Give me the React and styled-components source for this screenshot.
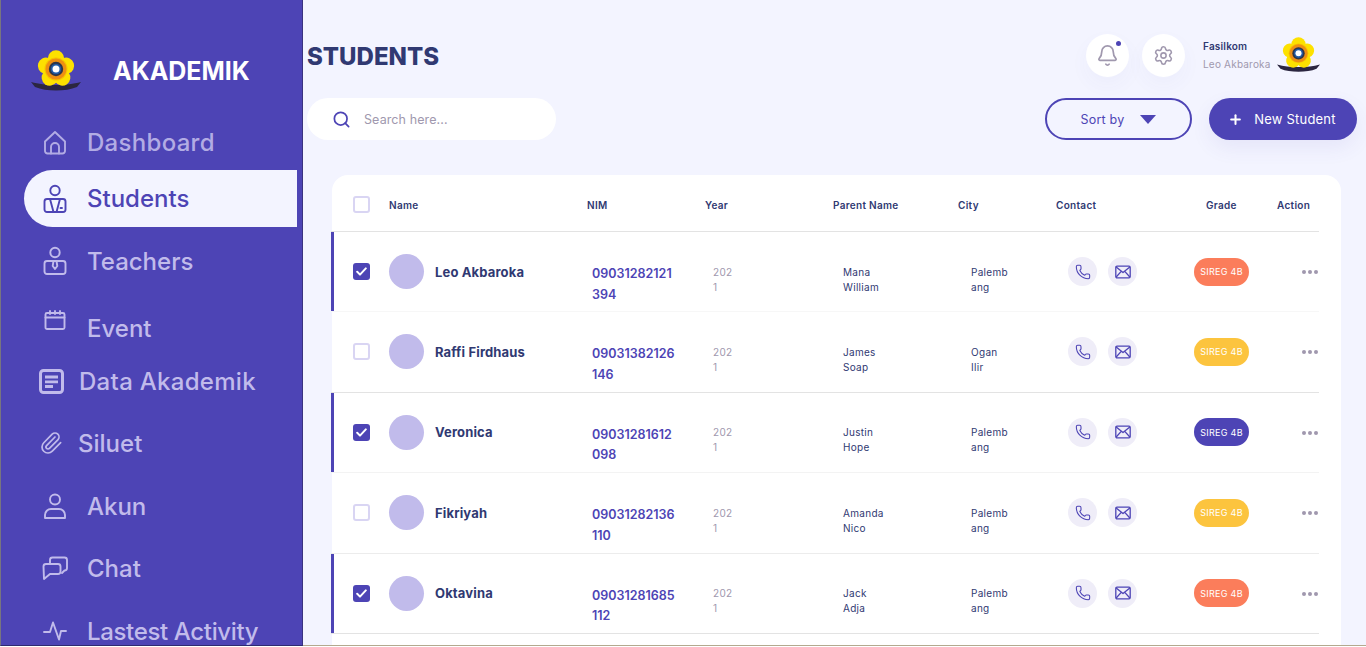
import React from "react";
import styled, { createGlobalStyle } from "styled-components";
import { Bell, Paperclip, Phone, Plus, Search, Settings } from "lucide-react";

const GlobalStyle = createGlobalStyle`
  html, body {
    margin: 0;
    padding: 0;
    background: #fff;
    font-family: Inter, "Noto Sans", sans-serif;
    overflow: hidden;
  }
  * {
    box-sizing: border-box;
  }
`;

const Page = styled.div`
  width: 1366px;
  height: 647px;
  display: flex;
  flex-direction: column;
  overflow: hidden;
`;

const Shell = styled.div`
  flex: 1;
  min-height: 0;
  display: flex;
  background: #f3f4ff;
  border-bottom: 1px solid #b3a98f;
`;

const Sidebar = styled.aside`
  width: 303px;
  flex: none;
  padding-top: 50px;
  background: #4d44b5;
  border-left: 1px solid #77757f;
  border-right: 1px solid #3a3380;
  border-bottom: 1px solid #2f2a70;
  margin-bottom: -1px;
  overflow: hidden;
`;

const Brand = styled.div`
  display: flex;
  align-items: center;
  gap: 32px;
  height: 42px;
  padding-left: 30px;
`;

const BrandName = styled.div`
  color: #fff;
  font-size: 25px;
  font-weight: 700;
`;

const Nav = styled.nav`
  margin-top: 26px;
  display: flex;
  flex-direction: column;
`;

const NavItem = styled.div`
  flex: none;
  display: flex;
  align-items: center;
  width: 273px;
  height: ${(p) => (p.$active ? 57 : 48)}px;
  margin-left: 23px;
  margin-top: ${(p) => p.$top}px;
  padding-left: ${(p) => p.$indent}px;
  gap: ${(p) => p.$gap}px;
  color: ${(p) => (p.$active ? "#4d44b5" : "#c1bbeb")};
  background: ${(p) => (p.$active ? "#f3f4ff" : "transparent")};
  border-radius: 29px 0 0 29px;
  font-size: 24px;
  font-weight: 500;
  letter-spacing: ${(p) => p.$track || 0}px;
  white-space: nowrap;
  opacity: ${(p) => (p.$dim ? 0.88 : 1)};
`;

const NavIcon = styled.span`
  width: 44px;
  flex: none;
  display: flex;
  justify-content: center;
  padding-bottom: ${(p) => p.$lift || 0}px;
`;

const Main = styled.main`
  flex: 1;
  min-width: 0;
  display: flex;
  flex-direction: column;
  padding: 34px 9px 0 4px;
  overflow: hidden;
`;

const TopBar = styled.header`
  display: flex;
  align-items: center;
  height: 43px;
  flex: none;
`;

const Title = styled.h1`
  margin: 1px 0 0;
  color: #303972;
  font-size: 24px;
  font-weight: 800;
`;

const TopActions = styled.div`
  margin-left: auto;
  display: flex;
  align-items: center;
  padding-right: 37px;
`;

const RoundButton = styled.div`
  position: relative;
  width: 43px;
  height: 43px;
  margin-right: 13px;
  border-radius: 50%;
  background: #fff;
  color: #a098ae;
  display: flex;
  align-items: center;
  justify-content: center;
  box-shadow: 0 8px 20px rgba(77, 68, 181, 0.04);
`;

const NotifyDot = styled.span`
  position: absolute;
  top: 7px;
  right: 8px;
  width: 5px;
  height: 5px;
  border-radius: 50%;
  background: #4d44b5;
`;

const Profile = styled.div`
  margin-left: 5px;
  margin-right: 7px;
  width: 67px;
`;

const ProfileName = styled.div`
  color: #303972;
  font-size: 10px;
  font-weight: 600;
  letter-spacing: 0.2px;
  line-height: 18px;
  margin-top: -1px;
`;

const ProfileRole = styled.div`
  color: #a098ae;
  font-size: 10px;
  letter-spacing: 0.2px;
  line-height: 18px;
  white-space: nowrap;
`;

const Toolbar = styled.div`
  flex: none;
  display: flex;
  align-items: center;
  height: 42px;
  margin-top: 21px;
`;

const SearchBox = styled.label`
  width: 249px;
  height: 42px;
  display: flex;
  align-items: center;
  gap: 11px;
  padding-left: 25px;
  background: #fff;
  border-radius: 21px;
  color: #4d44b5;
`;

const SearchInput = styled.input`
  flex: 1;
  min-width: 0;
  border: 0;
  outline: 0;
  background: none;
  font: 400 12.5px Inter, sans-serif;
  letter-spacing: 0.1px;
  color: #303972;
  &::placeholder {
    color: #a098ae;
    opacity: 1;
  }
`;

const SortButton = styled.button`
  margin-left: auto;
  width: 147px;
  height: 42px;
  display: flex;
  align-items: center;
  justify-content: center;
  gap: 16px;
  padding: 0;
  background: none;
  border: 2px solid #4d44b5;
  border-radius: 21px;
  color: #4d44b5;
  font: 400 12.5px Inter, sans-serif;
  letter-spacing: 0.2px;
`;

const NewButton = styled.button`
  margin-left: 17px;
  width: 148px;
  height: 42px;
  display: flex;
  align-items: center;
  justify-content: center;
  gap: 11px;
  padding: 0 2px 0 0;
  background: #4d44b5;
  border: 0;
  border-radius: 21px;
  color: #fff;
  font: 400 13px Inter, sans-serif;
  letter-spacing: 0.2px;
  box-shadow: 0 8px 20px rgba(77, 68, 181, 0.08);
`;

const Card = styled.section`
  flex: 1;
  min-height: 0;
  margin: 35px 16px 0 25px;
  padding-right: 22px;
  background: #fff;
  border-radius: 16px 16px 0 0;
`;

const columns = "58px 198px 118px 128px 125px 98px 138px 83px 42px";

const HeadRow = styled.div`
  display: grid;
  grid-template-columns: ${columns};
  align-items: center;
  height: 57px;
  margin-left: -1px;
  padding-top: 3px;
  border-bottom: 1px solid #e3e3e3;
`;

const HeadCell = styled.div`
  padding-left: ${(p) => p.$pad || 0}px;
  color: #303972;
  font-size: 10px;
  font-weight: 600;
  letter-spacing: 0.3px;
  white-space: nowrap;
`;

const Row = styled.div`
  display: grid;
  grid-template-columns: ${columns};
  align-items: start;
  height: 80.4px;
  margin-left: -1px;
  border-bottom: 1px solid ${(p) => p.$line};
  box-shadow: ${(p) => (p.$selected ? "inset 3px 0 0 #4d44b5" : "none")};
`;

const CheckCell = styled.div`
  display: flex;
  padding: ${(p) => p.$top}px 0 0 22px;
`;

const Checkbox = styled.span`
  width: 17px;
  height: 17px;
  border-radius: 3px;
  display: flex;
  align-items: center;
  justify-content: center;
  border: ${(p) => (p.$checked ? "none" : "2px solid #d9d5f3")};
  background: ${(p) => (p.$checked ? "#4d44b5" : "#fff")};
`;

const NameCell = styled.div`
  display: flex;
  align-items: center;
  gap: 11px;
  padding-top: 22px;
`;

const Avatar = styled.span`
  width: 35px;
  height: 35px;
  flex: none;
  border-radius: 50%;
  background: #c1bbeb;
`;

const StudentName = styled.span`
  color: #303972;
  font-size: 13px;
  font-weight: 700;
  letter-spacing: 0.15px;
  white-space: nowrap;
`;

const Nim = styled.div`
  padding: 32px 0 0 5px;
  color: #4d44b5;
  font-size: 12.5px;
  font-weight: 600;
  line-height: 20.5px;
  white-space: pre-line;
`;

const SmallText = styled.div`
  padding: 32.5px 0 0 ${(p) => p.$pad}px;
  color: ${(p) => p.$color || "#303972"};
  font-size: 10px;
  line-height: 15px;
  letter-spacing: 0.3px;
  white-space: pre-line;
`;

const ContactCell = styled.div`
  display: flex;
  gap: 11px;
  padding: 25px 0 0 12px;
`;

const ContactButton = styled.span`
  width: 29px;
  height: 29px;
  border-radius: 50%;
  background: #efedf8;
  color: #4d44b5;
  display: flex;
  align-items: center;
  justify-content: center;
`;

const GradeCell = styled.div`
  padding-top: 25.5px;
`;

const Badge = styled.span`
  display: flex;
  align-items: center;
  justify-content: center;
  width: 55px;
  height: 28px;
  border-radius: 14px;
  background: ${(p) => p.$color};
  color: #fff;
  font-size: 9px;
  letter-spacing: 0.3px;
  white-space: nowrap;
`;

const ActionCell = styled.div`
  padding: 38px 0 0 25px;
  display: flex;
  gap: 2px;
`;

const Dot = styled.span`
  width: 4px;
  height: 4px;
  flex: none;
  border-radius: 50%;
  background: #a098ae;
`;

const BottomEdge = styled.div`
  flex: none;
  height: 1px;
  background: #fff;
`;

const SortArrow = () => (
  <svg width="16" height="9" viewBox="0 0 16 9">
    <path d="M0 0H16L8 9Z" fill="#4d44b5" />
  </svg>
);

const Logo = ({ width }) => (
  <svg width={width} height={width * 0.84} viewBox="0 0 50 42">
    <path d="M0 32C8 34 15 35 25 35S42 34 50 32L46 37C40 39.500 33 40.500 25 40.500S10 39.500 4 37Z" fill="#2b2640" />
    {[0, 72, 144, 216, 288].map((a) => (
      <circle key={a} cx="25" cy="8.500" r="8.200" fill="#fde100" transform={`rotate(${a} 25 19)`} />
    ))}
    <circle cx="25" cy="19" r="11.500" fill="#f7c400" />
    <circle cx="25" cy="19" r="10.500" fill="#ee8f12" />
    <circle cx="25" cy="19" r="7.200" fill="#2f3548" />
    <circle cx="25" cy="19" r="5.300" fill="#1f5aa6" />
    <circle cx="25" cy="19" r="3.500" fill="#fff" />
  </svg>
);

const stroke = { fill: "none", stroke: "currentColor", strokeWidth: 1.9, strokeLinecap: "round", strokeLinejoin: "round" };

const HomeIcon = () => (
  <svg width="24" height="25" viewBox="0 0 24 25" {...stroke}>
    <path d="M2 11.5 12 2l10 9.5V21a2.5 2.5 0 0 1-2.5 2.5h-15A2.5 2.5 0 0 1 2 21Z" />
    <path d="M8 23.5V17a4 4 0 0 1 8 0v6.500" />
  </svg>
);

const StudentIcon = () => (
  <svg width="24" height="30" viewBox="0 0 24 30" {...stroke}>
    <circle cx="12" cy="6.500" r="4.700" />
    <rect x="1.500" y="15" width="21" height="13" rx="2.500" />
    <path d="M7 15l3.500 13M17 15l-3.500 13" />
    <path d="M17.500 24h1.500" />
  </svg>
);

const TeacherIcon = () => (
  <svg width="24" height="30" viewBox="0 0 24 30" {...stroke}>
    <circle cx="12" cy="6.500" r="4.700" />
    <rect x="1.500" y="15" width="21" height="13" rx="2.500" />
    <path d="M10.500 15h3l.8 5-2.300 3-2.300-3Z" />
  </svg>
);

const CalendarIcon = () => (
  <svg width="22" height="20" viewBox="0 0 22 20" {...stroke}>
    <rect x="1.500" y="3" width="19" height="16" rx="1.500" />
    <path d="M1.500 7.500h19M6 1v3M11 1v3M16 1v3" />
  </svg>
);

const DocIcon = () => (
  <svg width="25" height="25" viewBox="0 0 25 25" fill="none" stroke="currentColor">
    <rect x="1.500" y="1.500" width="22" height="22" rx="3" strokeWidth="3" />
    <path d="M6 8h13M6 12.800h13M6 17.500h8" strokeWidth="2.800" />
  </svg>
);

const UserIcon = () => (
  <svg width="22" height="26" viewBox="0 0 22 26" {...stroke}>
    <circle cx="11" cy="6.500" r="5" />
    <path d="M1 25v-3a6 6 0 0 1 6-6h8a6 6 0 0 1 6 6v3Z" />
  </svg>
);

const ChatIcon = () => (
  <svg width="27" height="25" viewBox="0 0 27 25" {...stroke}>
    <path d="M8 8V4a2.500 2.500 0 0 1 2.500-2.500h12A2.500 2.500 0 0 1 25 4v8a2.500 2.500 0 0 1-2.500 2.500L20 17" />
    <path d="M1.500 10.500A2.500 2.500 0 0 1 4 8h12a2.500 2.500 0 0 1 2.500 2.500v5A2.500 2.500 0 0 1 16 18H8l-6 5Z" />
  </svg>
);

const ActivityIcon = () => (
  <svg width="24" height="20" viewBox="0 0 24 20" {...stroke}>
    <path d="M1 11H7L10 1.500 16 18.500 18 10H23" />
  </svg>
);

const MailIcon = () => (
  <svg width="16" height="14" viewBox="0 0 16 14" fill="none" stroke="currentColor" strokeWidth="1.300" strokeLinejoin="round">
    <rect x="0.800" y="1.200" width="14.400" height="11.600" rx="1.200" />
    <path d="M1.200 2 8 7.600 14.800 2M1.200 12l5-5.600M14.800 12l-5-5.600" />
  </svg>
);

const CheckMark = () => (
  <svg width="11" height="9" viewBox="0 0 11 9" fill="none" stroke="#fff" strokeWidth="2" strokeLinecap="round" strokeLinejoin="round">
    <path d="M1.200 4.800 4 7.600 9.800 1.400" />
  </svg>
);

const navItems = [
  { label: "Dashboard", icon: <HomeIcon />, top: 0, indent: 9, gap: 10, dim: true, track: 0.3 },
  { label: "Students", icon: <StudentIcon />, top: 4, indent: 9, gap: 10, active: true },
  { label: "Teachers", icon: <TeacherIcon />, top: 10, indent: 9, gap: 10 },
  { label: "Event", icon: <CalendarIcon />, top: 19, indent: 9, gap: 10, lift: 16 },
  { label: "Data Akademik", icon: <DocIcon />, top: 5, indent: 5, gap: 6, track: 0.3 },
  { label: "Siluet", icon: <Paperclip size={24} strokeWidth={1.7} />, top: 14, indent: 5, gap: 5 },
  { label: "Akun", icon: <UserIcon />, top: 15, indent: 9, gap: 10 },
  { label: "Chat", icon: <ChatIcon />, top: 14, indent: 9, gap: 10 },
  { label: "Lastest Activity", icon: <ActivityIcon />, top: 15, indent: 9, gap: 10, track: -0.35 },
];

const students = [
  { name: "Leo Akbaroka", nim: "09031282121\n394", parent: "Mana\nWilliam", city: "Palemb\nang", grade: "#fb7d5b", selected: true, line: "#f7f7f7" },
  { name: "Raffi Firdhaus", nim: "09031382126\n146", parent: "James\nSoap", city: "Ogan\nIlir", grade: "#fcc43e", selected: false, line: "#e3e3e3" },
  { name: "Veronica", nim: "09031281612\n098", parent: "Justin\nHope", city: "Palemb\nang", grade: "#4d44b5", selected: true, line: "#f3f3f3" },
  { name: "Fikriyah", nim: "09031282136\n110", parent: "Amanda\nNico", city: "Palemb\nang", grade: "#fcc43e", selected: false, line: "#ececec" },
  { name: "Oktavina", nim: "09031281685\n112", parent: "Jack\nAdja", city: "Palemb\nang", grade: "#fb7d5b", selected: true, line: "#e3e3e3" },
];

const App = () => (
  <Page>
    <GlobalStyle />
    <Shell>
      <Sidebar>
        <Brand>
          <Logo width={50} />
          <BrandName>AKADEMIK</BrandName>
        </Brand>
        <Nav>
          {navItems.map((item) => (
            <NavItem
              key={item.label}
              $active={item.active}
              $top={item.top}
              $indent={item.indent}
              $gap={item.gap}
              $dim={item.dim}
              $track={item.track}
            >
              <NavIcon $lift={item.lift}>{item.icon}</NavIcon>
              {item.label}
            </NavItem>
          ))}
        </Nav>
      </Sidebar>
      <Main>
        <TopBar>
          <Title>STUDENTS</Title>
          <TopActions>
            <RoundButton>
              <Bell size={23} strokeWidth={1.8} />
              <NotifyDot />
            </RoundButton>
            <RoundButton>
              <Settings size={21} strokeWidth={1.8} />
            </RoundButton>
            <Profile>
              <ProfileName>Fasilkom</ProfileName>
              <ProfileRole>Leo Akbaroka</ProfileRole>
            </Profile>
            <Logo width={43} />
          </TopActions>
        </TopBar>
        <Toolbar>
          <SearchBox>
            <Search size={19} strokeWidth={2.2} />
            <SearchInput placeholder="Search here..." />
          </SearchBox>
          <SortButton>
            Sort by
            <SortArrow />
          </SortButton>
          <NewButton>
            <Plus size={15} strokeWidth={3.2} />
            New Student
          </NewButton>
        </Toolbar>
        <Card>
          <HeadRow>
            <CheckCell $top={0}>
              <Checkbox />
            </CheckCell>
            <HeadCell>Name</HeadCell>
            <HeadCell>NIM</HeadCell>
            <HeadCell>Year</HeadCell>
            <HeadCell>Parent Name</HeadCell>
            <HeadCell>City</HeadCell>
            <HeadCell>Contact</HeadCell>
            <HeadCell $pad={12}>Grade</HeadCell>
            <HeadCell>Action</HeadCell>
          </HeadRow>
          {students.map((s) => (
            <Row key={s.name} $selected={s.selected} $line={s.line}>
              <CheckCell $top={31}>
                <Checkbox $checked={s.selected}>{s.selected && <CheckMark />}</Checkbox>
              </CheckCell>
              <NameCell>
                <Avatar />
                <StudentName>{s.name}</StudentName>
              </NameCell>
              <Nim>{s.nim}</Nim>
              <SmallText $pad={8} $color="#a098ae">{"202\n1"}</SmallText>
              <SmallText $pad={10}>{s.parent}</SmallText>
              <SmallText $pad={13}>{s.city}</SmallText>
              <ContactCell>
                <ContactButton>
                  <Phone size={16} strokeWidth={1.6} />
                </ContactButton>
                <ContactButton>
                  <MailIcon />
                </ContactButton>
              </ContactCell>
              <GradeCell>
                <Badge $color={s.grade}>SIREG 4B</Badge>
              </GradeCell>
              <ActionCell>
                <Dot />
                <Dot />
                <Dot />
              </ActionCell>
            </Row>
          ))}
        </Card>
      </Main>
    </Shell>
    <BottomEdge />
  </Page>
);

export default App;
